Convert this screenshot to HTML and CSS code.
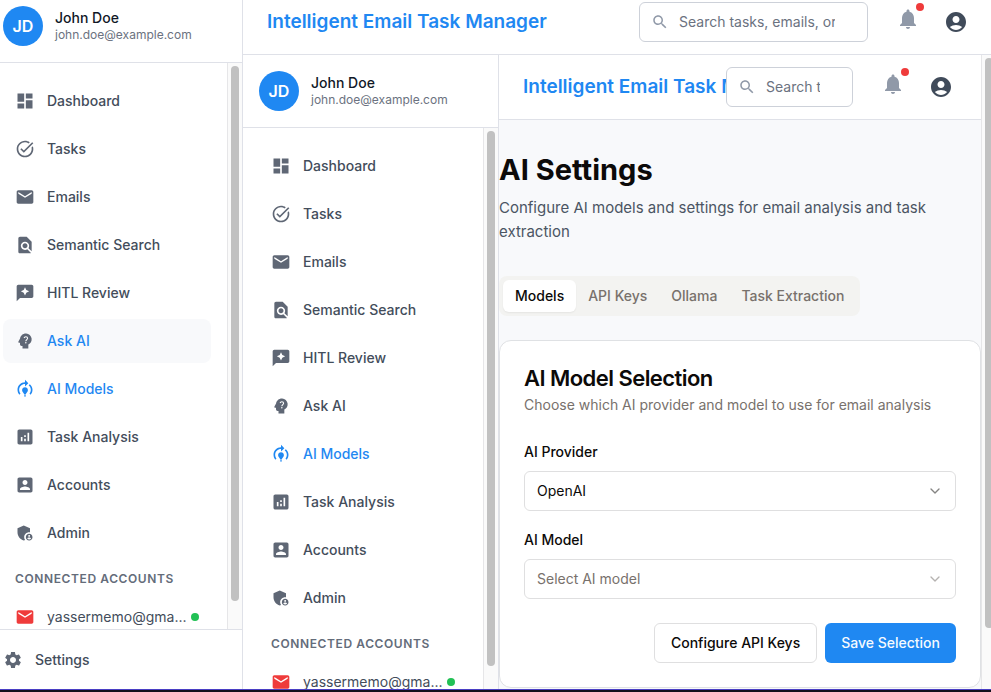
FILE: index.html
```html
<!DOCTYPE html>
<html lang="en">
<head>
<meta charset="utf-8">
<title>Intelligent Email Task Manager</title>
<link rel="stylesheet" href="styles.css">
</head>
<body>
<svg class="sprite" aria-hidden="true">
  <symbol id="dashboard" viewBox="0 0 24 24"><path d="M3 13h8V3H3v10zm0 8h8v-6H3v6zm10 0h8V11h-8v10zm0-18v6h8V3h-8z"/></symbol>
  <symbol id="task" viewBox="0 0 24 24"><path d="M22 5.18 10.59 16.6l-4.24-4.24 1.41-1.41 2.83 2.83 10-10L22 5.18zm-2.21 5.04c.13.57.21 1.17.21 1.78 0 4.42-3.58 8-8 8s-8-3.58-8-8 3.58-8 8-8c1.58 0 3.04.46 4.28 1.25l1.44-1.44C16.1 2.67 14.13 2 12 2 6.48 2 2 6.48 2 12s4.48 10 10 10 10-4.48 10-10c0-1.19-.22-2.33-.6-3.39l-1.61 1.61z"/></symbol>
  <symbol id="mail" viewBox="0 0 24 24"><path d="M20 4H4c-1.1 0-1.99.9-1.99 2L2 18c0 1.1.9 2 2 2h16c1.1 0 2-.9 2-2V6c0-1.1-.9-2-2-2zm0 4-8 5-8-5V6l8 5 8-5v2z"/></symbol>
  <symbol id="find" viewBox="0 0 24 24"><path d="M20 19.59V8l-6-6H6c-1.1 0-1.99.9-1.99 2L4 20c0 1.1.89 2 1.99 2H18c.45 0 .85-.15 1.19-.4l-4.43-4.43c-.8.52-1.74.83-2.76.83-2.76 0-5-2.24-5-5s2.24-5 5-5 5 2.24 5 5c0 1.02-.31 1.96-.83 2.75L20 19.59zM9 13c0 1.66 1.34 3 3 3s3-1.34 3-3-1.34-3-3-3-3 1.34-3 3z"/></symbol>
  <symbol id="review" viewBox="0 0 24 24"><path d="M20 2H4c-1.1 0-2 .9-2 2v18l4-4h14c1.1 0 2-.9 2-2V4c0-1.1-.9-2-2-2zm-6.43 9.57L12 15l-1.57-3.43L7 10l3.43-1.57L12 5l1.57 3.43L17 10l-3.43 1.57z"/></symbol>
  <symbol id="ask" viewBox="0 0 24 24"><path d="M19.94 9.06c-.43-3.27-3.23-5.86-6.53-6.05C13.27 3 13.14 3 13 3 9.47 3 6.57 5.61 6.08 9l-1.93 3.48c-.41.66.07 1.52.85 1.52h1v2c0 1.1.9 2 2 2h1v3h7v-4.68c2.62-1.25 4.35-4.08 3.94-7.26z"/><path d="M10.9 8.4c.3-1 1.1-1.6 2.1-1.6 1.2 0 2.1.8 2.1 1.9 0 1.5-2.1 1.7-2.1 3.5" fill="none" stroke="#fff" stroke-width="1.3"/><circle cx="13" cy="14" r=".9" fill="#fff"/></symbol>
  <symbol id="model" viewBox="0 0 24 24"><path d="M15.5 13.5c0 2-2.5 3.5-2.5 5h-2c0-1.5-2.5-3-2.5-5 0-1.93 1.57-3.5 3.5-3.5s3.5 1.57 3.5 3.5zm-2.5 6h-2V21h2v-1.5zM19 13c0 1.68-.59 3.21-1.58 4.42l1.42 1.42C20.18 17.27 21 15.23 21 13c0-2.74-1.23-5.19-3.16-6.84l-1.42 1.42C17.99 8.86 19 10.82 19 13zm-3-8-4-4v3c-4.97 0-9 4.03-9 9 0 2.23.82 4.27 2.16 5.84l1.42-1.42C5.59 16.21 5 14.68 5 13c0-3.86 3.14-7 7-7v3l4-4z"/></symbol>
  <symbol id="analytics" viewBox="0 0 24 24"><path d="M19 3H5c-1.1 0-2 .9-2 2v14c0 1.1.9 2 2 2h14c1.1 0 2-.9 2-2V5c0-1.1-.9-2-2-2zM9 17H7v-5h2v5zm4 0h-2v-3h2v3zm0-5h-2v-2h2v2zm4 5h-2V7h2v10z"/></symbol>
  <symbol id="account" viewBox="0 0 24 24"><path d="M3 5v14c0 1.1.89 2 2 2h14c1.1 0 2-.9 2-2V5c0-1.1-.9-2-2-2H5c-1.11 0-2 .9-2 2zm12 4c0 1.66-1.34 3-3 3s-3-1.34-3-3 1.34-3 3-3 3 1.34 3 3zm-9 8c0-2 4-3.1 6-3.1s6 1.1 6 3.1v1H6v-1z"/></symbol>
  <symbol id="admin" viewBox="0 0 24 24"><path d="M17 11c.34 0 .67.04 1 .09V6.27L10.5 3 3 6.27v4.91c0 4.54 3.2 8.79 7.5 9.82.55-.13 1.08-.32 1.6-.55-.69-.98-1.1-2.17-1.1-3.45 0-3.31 2.69-6 6-6z"/><path d="M17 13c-2.21 0-4 1.79-4 4s1.79 4 4 4 4-1.79 4-4-1.79-4-4-4zm0 1.38c.62 0 1.12.51 1.12 1.12s-.51 1.12-1.12 1.12-1.12-.51-1.12-1.12.5-1.12 1.12-1.12zm0 5.37c-.93 0-1.74-.46-2.24-1.17.05-.72 1.51-1.08 2.24-1.08s2.19.36 2.24 1.08c-.5.71-1.31 1.17-2.24 1.17z"/></symbol>
  <symbol id="gear" viewBox="0 0 24 24"><path d="M19.14 12.94c.04-.3.06-.61.06-.94 0-.32-.02-.64-.07-.94l2.03-1.58c.18-.14.23-.41.12-.61l-1.92-3.32c-.12-.22-.37-.29-.59-.22l-2.39.96c-.5-.38-1.03-.7-1.62-.94l-.36-2.54c-.04-.24-.24-.41-.48-.41h-3.84c-.24 0-.43.17-.47.41l-.36 2.54c-.59.24-1.13.57-1.62.94l-2.39-.96c-.22-.08-.47 0-.59.22L2.74 8.87c-.12.21-.08.47.12.61l2.03 1.58c-.05.3-.09.63-.09.94s.02.64.07.94l-2.03 1.58c-.18.14-.23.41-.12.61l1.92 3.32c.12.22.37.29.59.22l2.39-.96c.5.38 1.03.7 1.62.94l.36 2.54c.05.24.24.41.48.41h3.84c.24 0 .44-.17.47-.41l.36-2.54c.59-.24 1.13-.56 1.62-.94l2.39.96c.22.08.47 0 .59-.22l1.92-3.32c.12-.22.07-.47-.12-.61l-2.01-1.58zM12 15.6c-1.98 0-3.6-1.62-3.6-3.6s1.62-3.6 3.6-3.6 3.6 1.62 3.6 3.6-1.62 3.6-3.6 3.6z"/></symbol>
  <symbol id="bell" viewBox="0 0 24 24"><path d="M12 22c1.1 0 2-.9 2-2h-4c0 1.1.89 2 2 2zm6-6v-5c0-3.07-1.64-5.64-4.5-6.32V4c0-.83-.67-1.5-1.5-1.5s-1.5.67-1.5 1.5v.68C7.63 5.36 6 7.92 6 11v5l-2 2v1h16v-1l-2-2z"/></symbol>
  <symbol id="person" viewBox="0 0 24 24"><path d="M12 2C6.48 2 2 6.48 2 12s4.48 10 10 10 10-4.48 10-10S17.52 2 12 2zm0 4c1.93 0 3.5 1.57 3.5 3.5S13.93 13 12 13s-3.5-1.57-3.5-3.5S10.07 6 12 6zm0 14c-2.03 0-4.43-.82-6.14-2.88C7.55 15.8 9.68 15 12 15s4.45.8 6.14 2.12C16.43 19.18 14.03 20 12 20z"/></symbol>
  <symbol id="search" viewBox="0 0 24 24"><path d="M15.5 14h-.79l-.28-.27C15.41 12.59 16 11.11 16 9.5 16 5.91 13.09 3 9.5 3S3 5.91 3 9.5 5.91 16 9.5 16c1.61 0 3.09-.59 4.23-1.57l.27.28v.79l5 4.99L20.49 19l-4.99-5zm-6 0C7.01 14 5 11.99 5 9.5S7.01 5 9.5 5 14 7.01 14 9.5 11.99 14 9.5 14z"/></symbol>
  <symbol id="chevron" viewBox="0 0 24 24"><path d="m6 9 6 6 6-6" fill="none" stroke="currentColor" stroke-width="2" stroke-linecap="round" stroke-linejoin="round"/></symbol>
</svg>

<div class="page">
  <div class="shell">
    <aside class="sidebar sidebar-outer">
      <div class="profile">
        <span class="avatar">JD</span>
        <div><div class="name">John Doe</div><div class="mail">john.doe@example.com</div></div>
      </div>
      <div class="scroller">
        <nav class="nav">
          <a class="item" href="#"><svg><use href="#dashboard"/></svg><span>Dashboard</span></a>
          <a class="item" href="#"><svg><use href="#task"/></svg><span>Tasks</span></a>
          <a class="item" href="#"><svg><use href="#mail"/></svg><span>Emails</span></a>
          <a class="item" href="#"><svg><use href="#find"/></svg><span>Semantic Search</span></a>
          <a class="item" href="#"><svg><use href="#review"/></svg><span>HITL Review</span></a>
          <a class="item hovered" href="#"><svg><use href="#ask"/></svg><span>Ask AI</span></a>
          <a class="item active" href="#"><svg><use href="#model"/></svg><span>AI Models</span></a>
          <a class="item" href="#"><svg><use href="#analytics"/></svg><span>Task Analysis</span></a>
          <a class="item" href="#"><svg><use href="#account"/></svg><span>Accounts</span></a>
          <a class="item" href="#"><svg><use href="#admin"/></svg><span>Admin</span></a>
          <h2 class="group">Connected Accounts</h2>
          <a class="item linked" href="#"><svg><use href="#mail"/></svg><span>yassermemo@gma...</span><i class="online"></i></a>
        </nav>
        <div class="track"><div class="thumb"></div></div>
      </div>
      <div class="foot"><a class="item" href="#"><svg><use href="#gear"/></svg><span>Settings</span></a></div>
    </aside>

    <div class="main">
      <header class="topbar topbar-outer">
        <div class="brand">Intelligent Email Task Manager</div>
        <label class="search"><svg><use href="#search"/></svg><input type="text" aria-label="Search" placeholder="Search tasks, emails, or contacts..."></label>
        <div class="actions">
          <button class="bell" aria-label="Notifications"><svg><use href="#bell"/></svg><i></i></button>
          <button class="user" aria-label="Account"><svg><use href="#person"/></svg></button>
        </div>
      </header>

      <div class="shell">
        <aside class="sidebar">
          <div class="profile">
            <span class="avatar">JD</span>
            <div><div class="name">John Doe</div><div class="mail">john.doe@example.com</div></div>
          </div>
          <div class="scroller">
            <nav class="nav">
              <a class="item" href="#"><svg><use href="#dashboard"/></svg><span>Dashboard</span></a>
              <a class="item" href="#"><svg><use href="#task"/></svg><span>Tasks</span></a>
              <a class="item" href="#"><svg><use href="#mail"/></svg><span>Emails</span></a>
              <a class="item" href="#"><svg><use href="#find"/></svg><span>Semantic Search</span></a>
              <a class="item" href="#"><svg><use href="#review"/></svg><span>HITL Review</span></a>
              <a class="item" href="#"><svg><use href="#ask"/></svg><span>Ask AI</span></a>
              <a class="item active" href="#"><svg><use href="#model"/></svg><span>AI Models</span></a>
              <a class="item" href="#"><svg><use href="#analytics"/></svg><span>Task Analysis</span></a>
              <a class="item" href="#"><svg><use href="#account"/></svg><span>Accounts</span></a>
              <a class="item" href="#"><svg><use href="#admin"/></svg><span>Admin</span></a>
              <h2 class="group">Connected Accounts</h2>
              <a class="item linked" href="#"><svg><use href="#mail"/></svg><span>yassermemo@gma...</span><i class="online"></i></a>
            </nav>
            <div class="track"><div class="thumb"></div></div>
          </div>
        </aside>

        <div class="main">
          <header class="topbar topbar-inner">
            <div class="brand">Intelligent Email Task Manager</div>
            <label class="search"><svg><use href="#search"/></svg><input type="text" aria-label="Search" placeholder="Search tasks, emails, or contacts..."></label>
            <div class="actions">
              <button class="bell" aria-label="Notifications"><svg><use href="#bell"/></svg><i></i></button>
              <button class="user" aria-label="Account"><svg><use href="#person"/></svg></button>
            </div>
          </header>
          <main class="content">
            <h1>AI Settings</h1>
            <p class="lead">Configure AI models and settings for email analysis and task extraction</p>
            <div class="tabs" role="tablist">
              <button role="tab" aria-selected="true">Models</button>
              <button role="tab" aria-selected="false">API Keys</button>
              <button role="tab" aria-selected="false">Ollama</button>
              <button role="tab" aria-selected="false">Task Extraction</button>
            </div>
            <section class="card">
              <h3>AI Model Selection</h3>
              <p class="hint">Choose which AI provider and model to use for email analysis</p>
              <div class="field">
                <label for="provider">AI Provider</label>
                <div class="select"><select id="provider"><option>OpenAI</option></select><svg><use href="#chevron"/></svg></div>
              </div>
              <div class="field">
                <label for="model-name">AI Model</label>
                <div class="select empty"><select id="model-name"><option>Select AI model</option></select><svg><use href="#chevron"/></svg></div>
              </div>
              <div class="buttons">
                <button class="btn">Configure API Keys</button>
                <button class="btn primary">Save Selection</button>
              </div>
            </section>
          </main>
        </div>
        <div class="track track-page"><div class="thumb"></div></div>
      </div>
    </div>
  </div>
  <div class="strip"></div>
</div>
</body>
</html>
```
FILE: styles.css
```css
* { box-sizing: border-box; }
body, h1, h2, h3, p { margin: 0; }
body {
  font-family: Inter, "Liberation Sans", sans-serif;
  font-size: 14px;
  line-height: 20px;
  color: #0c0a09;
  background: #fff;
}
button, input, select { font: inherit; color: inherit; }
button { border: 0; background: none; padding: 0; }
a { color: inherit; text-decoration: none; }
svg { display: block; flex: none; fill: currentColor; }
.sprite { position: absolute; width: 0; height: 0; }

.page { display: flex; flex-direction: column; height: 100vh; overflow: hidden; }
.strip { flex: none; height: 3px; background: #11121d; border-top: 1px solid #4a3fc4; }
.shell { display: flex; flex: 1; min-height: 0; }
.main { display: flex; flex-direction: column; flex: 1; min-width: 0; min-height: 0; }

/* Sidebar */
.sidebar { display: flex; flex-direction: column; flex: none; width: 256px; background: #fff; border-right: 1px solid #dfe1e8; }
.sidebar-outer { width: 243px; }
.profile { display: flex; align-items: center; gap: 12px; padding: 16px; border-bottom: 1px solid #dfe1e8; }
.sidebar-outer .profile { padding: 6px 16px 16px 3px; }
.avatar {
  display: flex; align-items: center; justify-content: center;
  width: 40px; height: 40px; border-radius: 50%;
  background: #1f88f2; color: #fff; font-size: 16px; font-weight: 600;
}
.name { font-weight: 500; line-height: 18px; color: #111827; }
.mail { font-size: 12px; line-height: 16px; color: #6b7280; }
.scroller { display: flex; flex: 1; min-height: 0; overflow: hidden; }
.nav { display: flex; flex-direction: column; gap: 4px; flex: 1; min-width: 0; padding: 16px; }
.sidebar-outer .nav { padding-left: 3px; }
.item { display: flex; align-items: center; gap: 12px; flex: none; height: 44px; padding: 0 12px; border-radius: 8px; font-weight: 500; color: #434d5b; }
.item svg { width: 20px; height: 20px; color: #5f6775; }
.item.hovered { background: #f8f9fb; color: #1f88f2; }
.item.active, .item.active svg { color: #1f88f2; }
.item.linked { gap: 4px; font-weight: 400; }
.item.linked svg { color: #ef3b3b; margin-right: 8px; }
.item.linked span { flex: 1; min-width: 0; white-space: nowrap; }
.online { flex: none; width: 8px; height: 8px; border-radius: 50%; background: #22c155; }
.group { flex: none; padding: 12px 12px 4px; font-size: 12px; line-height: 16px; font-weight: 600; letter-spacing: 0.05em; text-transform: uppercase; color: #646c7a; }
.foot { padding: 8px 16px 7px 0; border-top: 1px solid #dfe1e8; }
.foot .item { padding: 0 3px; }

/* Scroll tracks */
.track { flex: none; width: 15px; padding: 3px 3px 0; background: #fafafa; border-left: 1px solid #e6e6e8; }
.thumb { width: 8px; height: 535px; border-radius: 4px; background: #c1c1c1; }
.track-page { width: 10px; padding-right: 0; overflow: hidden; }
.track-page .thumb { height: 570px; }

/* Top bars */
.topbar { display: flex; align-items: center; flex: none; background: #fff; border-bottom: 1px solid #dfe1e8; }
.topbar-outer { padding: 2px 23px 12px 24px; }
.topbar-inner { padding: 12px 28px 12px 24px; }
.brand { flex: 1; min-width: 0; overflow: hidden; white-space: nowrap; font-size: 19px; line-height: 28px; font-weight: 600; color: #1f88f2; }
.search { display: flex; align-items: center; flex: none; width: 229px; height: 40px; padding: 0 32px 0 11px; border: 1px solid #cdd1d9; border-radius: 6px; background: #fff; }
.topbar-inner .search { width: 127px; }
.search svg { width: 18px; height: 18px; margin-right: 10px; color: #9099a8; }
.search input { flex: 1; min-width: 0; padding: 0; border: 0; outline: 0; background: none; }
.search input::placeholder { color: #6b7280; opacity: 1; }
.actions { display: flex; gap: 24px; margin-left: 28px; }
.actions svg { width: 24px; height: 24px; }
.bell { position: relative; padding-bottom: 6px; color: #9099a8; }
.bell i { position: absolute; top: -4px; right: -4px; width: 8px; height: 8px; border-radius: 50%; background: #ef3b3b; }
.user { color: #404b5a; }

/* Settings content */
.content { flex: 1; min-height: 0; padding-top: 32px; background: #f8f9fb; overflow: hidden; }
h1 { font-size: 29px; line-height: 36px; font-weight: 700; margin-bottom: 8px; }
.lead { font-size: 15px; line-height: 24px; margin-bottom: 32px; color: #4b5563; }
.tabs { display: inline-flex; padding: 4px; border-radius: 8px; background: #f3f3f1; color: #78716c; vertical-align: top; }
.tabs button { height: 32px; padding: 0 12px; border-radius: 6px; font-weight: 500; }
.tabs [aria-selected="true"] { background: #fff; color: #0c0a09; box-shadow: 0 1px 2px rgba(0, 0, 0, .06); }
.card { margin-top: 24px; padding: 24px; background: #fff; border: 1px solid #dfe1e4; border-radius: 12px; }
h3 { font-size: 22px; line-height: 26px; font-weight: 600; letter-spacing: -0.025em; }
.hint { margin: 4px 0 24px; color: #78716c; }
.field { margin-bottom: 16px; }
.field label { display: block; line-height: 26px; margin-bottom: 6px; font-weight: 500; }
.select { position: relative; }
.select select { appearance: none; width: 100%; height: 40px; padding: 0 12px; border: 1px solid #dfdfe0; border-radius: 6px; background: #fff; }
.select svg { position: absolute; right: 13px; top: 12px; width: 16px; height: 16px; color: #858483; pointer-events: none; }
.select.empty select { color: #78716c; }
.select.empty svg { color: #b5b2b0; }
.buttons { display: flex; justify-content: flex-end; gap: 8px; padding-top: 8px; }
.btn { height: 40px; padding: 0 16px; border: 1px solid #dfdfe0; border-radius: 6px; background: #fff; font-weight: 500; }
.btn.primary { background: #1f88f2; border: 0; color: #f5faff; }
```
